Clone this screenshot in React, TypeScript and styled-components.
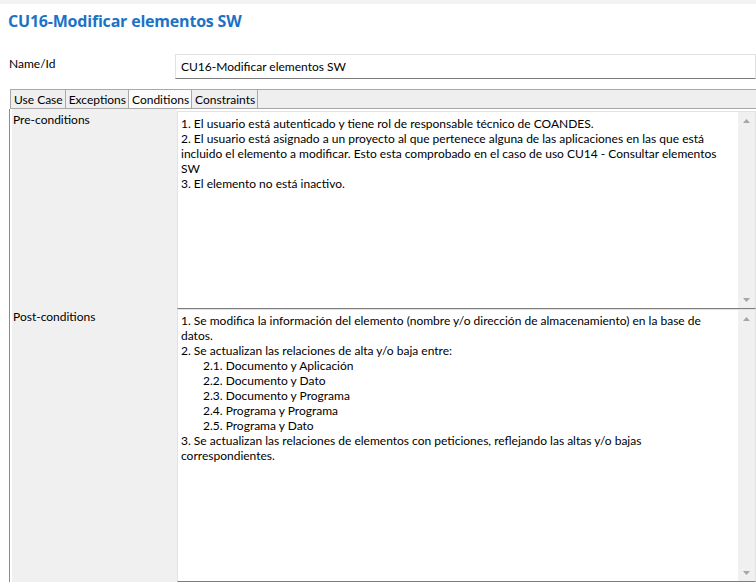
import React from "react";
import styled, { createGlobalStyle } from "styled-components";

const GlobalStyle = createGlobalStyle`
  html, body { margin: 0; padding: 0; background: #ffffff; }
  body { font-family: "Lato", "Liberation Sans", sans-serif; font-size: 12px; color: #000; }
`;

const Page = styled.div`
  width: 756px;
  height: 584px;
  overflow: hidden;
  display: flex;
  flex-direction: column;
  background: #fff;
`;

const TopBand = styled.div`
  height: 4px;
  background: #f3f3f3;
`;

const Title = styled.h1`
  margin: 6px 0 0 8px;
  font-family: "Open Sans", "Liberation Sans", sans-serif;
  font-weight: 700;
  font-size: 16px;
  letter-spacing: -0.2px;
  line-height: 22px;
  color: #1b73c6;
`;

const NameRow = styled.div`
  display: grid;
  grid-template-columns: 175px 1fr;
  margin-top: 22px;
`;

const FieldLabel = styled.div`
  padding: 2px 0 0 9px;
  line-height: 15px;
  color: #000;
`;

const TextBox = styled.div`
  height: 25px;
  box-sizing: border-box;
  border: 1px solid #e2e2e2;
  border-bottom-color: #7d7d7d;
  padding: 4px 5px 0;
  line-height: 15px;
  color: #000;
  white-space: nowrap;
`;

const TabStrip = styled.div`
  margin-top: 10px;
  margin-left: 10px;
  height: 20px;
  box-sizing: border-box;
  display: flex;
  background: #efefef;
  border-top: 1px solid #a8a8a8;
  border-bottom: 1px solid #a8a8a8;
`;

const Tab = styled.div<{ $active?: boolean; $first?: boolean }>`
  display: flex;
  align-items: center;
  padding: 0 2px 0 3px;
  border-right: 1px solid #a8a8a8;
  border-left: ${(p) => (p.$first ? "1px solid #a8a8a8" : "none")};
  background: ${(p) => (p.$active ? "#fbfbfb" : "transparent")};
  color: #000;
  line-height: 15px;
`;

const Body = styled.div`
  margin-left: 9px;
  border-left: 1px solid #8c8c8c;
  display: grid;
  grid-template-columns: 167px 1fr;
  grid-template-rows: 200px 273px;
`;

const SideCell = styled.div<{ $top: number }>`
  margin-left: 2px;
  background: #f0f0f0;
  padding: ${(p) => p.$top}px 0 0 1px;
  line-height: 15px;
  color: #000;
`;

const Area = styled.div<{ $gapTop?: number }>`
  margin-top: ${(p) => p.$gapTop ?? 0}px;
  box-sizing: border-box;
  border: 1px solid #e2e2e2;
  border-bottom-color: #7d7d7d;
  display: flex;
  min-height: 0;
`;

const AreaText = styled.div<{ $padTop: number }>`
  flex: 1;
  padding: ${(p) => p.$padTop}px 3px 0 3px;
  line-height: 15px;
  color: #000;
`;

const Line = styled.div<{ $indent?: boolean }>`
  white-space: nowrap;
  padding-left: ${(p) => (p.$indent ? 22 : 0)}px;
`;

const ScrollBar = styled.div`
  width: 17px;
  background: #f0f0f0;
  display: flex;
  flex-direction: column;
  justify-content: space-between;
`;

const ScrollBtn = styled.div`
  height: 17px;
  display: flex;
  align-items: center;
  justify-content: center;
`;

const Arrow = ({ down }: { down?: boolean }) => (
  <svg width="7" height="4" viewBox="0 0 7 4">
    <polygon points={down ? "0,0 7,0 3.5,4" : "3.5,0 7,4 0,4"} fill="#a6a6a6" />
  </svg>
);

const Scroll = () => (
  <ScrollBar>
    <ScrollBtn>
      <Arrow />
    </ScrollBtn>
    <ScrollBtn>
      <Arrow down />
    </ScrollBtn>
  </ScrollBar>
);

const preLines = [
  "1. El usuario está autenticado y tiene rol de responsable técnico de COANDES.",
  "2. El usuario está asignado a un proyecto al que pertenece alguna de las aplicaciones en las que está",
  "incluido el elemento a modificar. Esto esta comprobado en el caso de uso CU14 - Consultar elementos",
  "SW",
  "3. El elemento no está inactivo.",
];

const postLines: { t: string; indent?: boolean }[] = [
  { t: "1. Se modifica la información del elemento (nombre y/o dirección de almacenamiento) en la base de" },
  { t: "datos." },
  { t: "2. Se actualizan las relaciones de alta y/o baja entre:" },
  { t: "2.1. Documento y Aplicación", indent: true },
  { t: "2.2. Documento y Dato", indent: true },
  { t: "2.3. Documento y Programa", indent: true },
  { t: "2.4. Programa y Programa", indent: true },
  { t: "2.5. Programa y Dato", indent: true },
  { t: "3. Se actualizan las relaciones de elementos con peticiones, reflejando las altas y/o bajas" },
  { t: "correspondientes." },
];

export default function App() {
  return (
    <Page>
      <GlobalStyle />
      <TopBand />
      <Title>CU16-Modificar elementos SW</Title>
      <NameRow>
        <FieldLabel>Name/Id</FieldLabel>
        <TextBox>CU16-Modificar elementos SW</TextBox>
      </NameRow>
      <TabStrip>
        <Tab $first>Use Case</Tab>
        <Tab>Exceptions</Tab>
        <Tab $active>Conditions</Tab>
        <Tab>Constraints</Tab>
      </TabStrip>
      <Body>
        <SideCell $top={3}>Pre-conditions</SideCell>
        <Area $gapTop={2}>
          <AreaText $padTop={4}>
            {preLines.map((l) => (
              <Line key={l}>{l}</Line>
            ))}
          </AreaText>
          <Scroll />
        </Area>
        <SideCell $top={0}>Post-conditions</SideCell>
        <Area>
          <AreaText $padTop={3}>
            {postLines.map((l) => (
              <Line key={l.t} $indent={l.indent}>
                {l.t}
              </Line>
            ))}
          </AreaText>
          <Scroll />
        </Area>
      </Body>
    </Page>
  );
}
